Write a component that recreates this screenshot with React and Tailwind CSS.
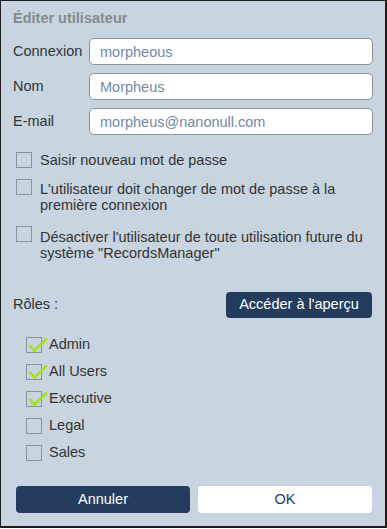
import { useState } from "react";

const font = { fontFamily: '"Liberation Sans", Arial, sans-serif' };

function Box({ checked }) {
    return (
        <span className="relative block w-[16px] h-[16px] shrink-0 border border-[#8a949c]">
            {checked && (
                <svg
                    className="absolute left-0 top-0 overflow-visible"
                    width="16"
                    height="16"
                    viewBox="0 0 16 16"
                >
                    <path
                        d="M3.3 7.8 L7.2 12.8 L19 1.2"
                        fill="none"
                        stroke="#a6e21c"
                        strokeWidth="2.6"
                        strokeLinecap="round"
                        strokeLinejoin="round"
                    />
                </svg>
            )}
        </span>
    );
}

export default function App() {
    const [form] = useState({
        login: "morpheous",
        name: "Morpheus",
        email: "morpheus@nanonull.com",
    });

    const roles = [
        { label: "Admin", checked: true },
        { label: "All Users", checked: true },
        { label: "Executive", checked: true },
        { label: "Legal", checked: false },
        { label: "Sales", checked: false },
    ];

    return (
        <div
            style={font}
            className="w-[387px] h-[528px] bg-[#c8d5e0] border-l border-t border-r-2 border-b-2 border-[#1e1e1e] pl-[12px] pr-[12px] text-[14.5px] text-[#333]"
        >
            {/* Title */}
            <h1 className="pt-[9px] leading-[16px] font-bold text-[#858a8f]">
                Éditer utilisateur
            </h1>

            {/* Fields */}
            <div className="mt-[12px] grid grid-cols-[76px_1fr] gap-y-[8px] items-center">
                <label>Connexion</label>
                <input
                    readOnly
                    value={form.login}
                    className="h-[27px] px-[10px] rounded-[5px] bg-white border border-[#8a949c] text-[#7189a6] outline-none"
                />
                <label>Nom</label>
                <input
                    readOnly
                    value={form.name}
                    className="h-[27px] px-[10px] rounded-[5px] bg-white border border-[#8a949c] text-[#7189a6] outline-none"
                />
                <label>E-mail</label>
                <input
                    readOnly
                    value={form.email}
                    className="h-[27px] px-[10px] rounded-[5px] bg-white border border-[#8a949c] text-[#7189a6] outline-none"
                />
            </div>

            {/* Options */}
            <div className="mt-[17px] pl-[3px] leading-[16px]">
                <div className="flex items-start gap-[8px]">
                    <Box />
                    <span>Saisir nouveau mot de passe</span>
                </div>
                <div className="mt-[13px] flex items-start gap-[8px]">
                    <span className="mt-[-2px]"><Box /></span>
                    <span>
                        L'utilisateur doit changer de mot de passe à la
                        <br />
                        première connexion
                    </span>
                </div>
                <div className="mt-[16px] flex items-start gap-[8px]">
                    <span className="mt-[-3px]"><Box /></span>
                    <span>
                        Désactiver l'utilisateur de toute utilisation future du
                        <br />
                        système "RecordsManager"
                    </span>
                </div>
            </div>

            {/* Roles header */}
            <div className="mt-[31px] flex items-center justify-between">
                <span>Rôles :</span>
                <button className="w-[146px] h-[26px] mr-[1px] rounded-[4px] bg-[#243d5f] text-white">
                    Accéder à l'aperçu
                </button>
            </div>

            {/* Roles list */}
            <div className="mt-[13px] pl-[13px]">
                {roles.map((r) => (
                    <div key={r.label} className="h-[27px] flex items-center gap-[7px]">
                        <Box checked={r.checked} />
                        <span>{r.label}</span>
                    </div>
                ))}
            </div>

            {/* Actions */}
            <div className="mt-[20px] grid grid-cols-2 gap-[8px] pl-[3px] pr-[1px]">
                <button className="h-[27px] rounded-[4px] bg-[#243d5f] text-white">
                    Annuler
                </button>
                <button className="h-[27px] rounded-[4px] bg-white text-[#243d5f]">
                    OK
                </button>
            </div>
        </div>
    );
}
